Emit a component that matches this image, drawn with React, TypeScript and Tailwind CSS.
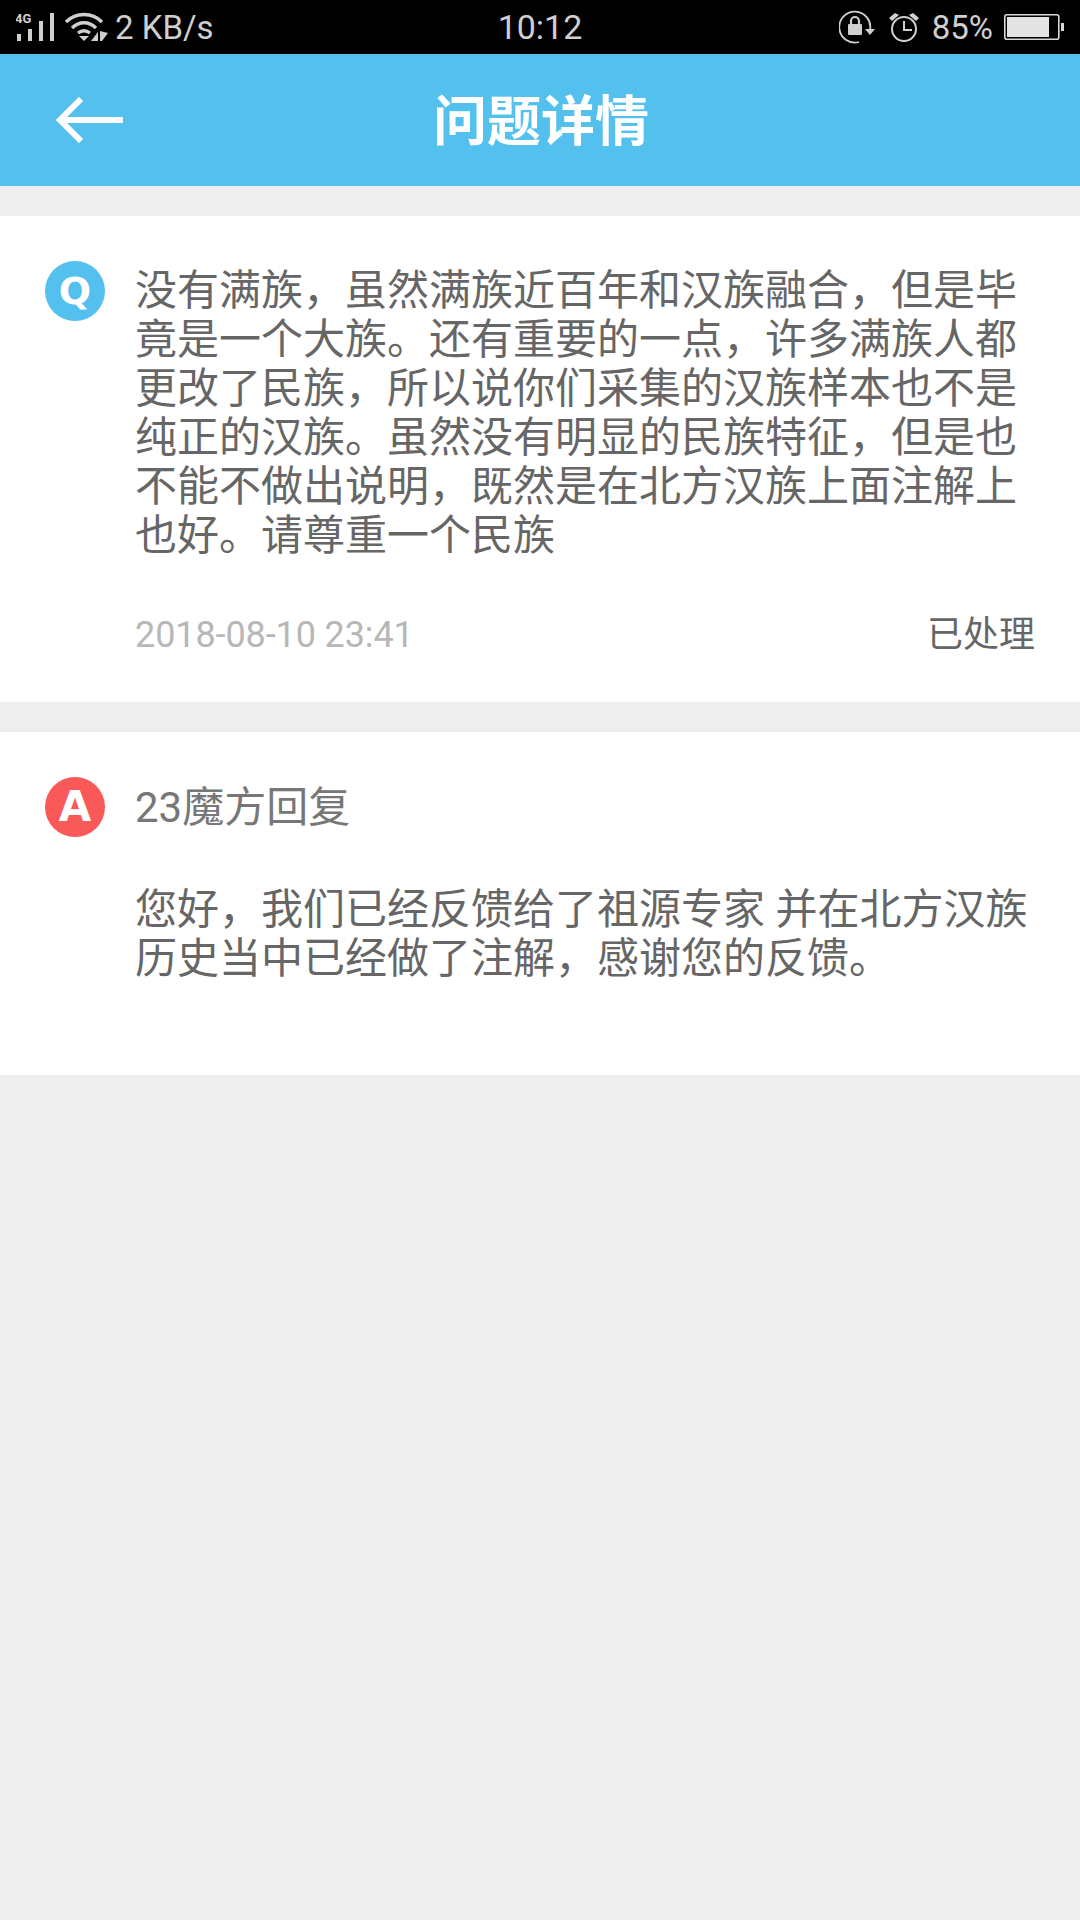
import React from "react";

const FONT = "font-['Roboto','Noto_Sans_CJK_SC',sans-serif]";

function StatusBar() {
  return (
    <div className="flex h-[54px] items-center justify-between bg-black text-[#cfcfcf]">
      <div className="flex w-[320px] items-center pl-[16px]">
        {/* signal */}
        <svg width="42" height="54" viewBox="0 0 42 54" fill="currentColor">
          <text x="-1" y="23" fontSize="13" fontWeight="700" fontFamily="Roboto">4G</text>
          <rect x="1" y="34" width="4" height="7" />
          <rect x="12" y="29" width="4" height="12" />
          <rect x="23" y="21" width="4" height="20" />
          <rect x="34" y="13" width="4" height="28" />
        </svg>
        {/* wifi */}
        <svg width="44" height="54" viewBox="0 0 44 54" className="ml-[7px]" fill="none" stroke="currentColor" strokeWidth="3.4">
          <path d="M1 22 C11 12 27 12 37 22" />
          <path d="M7 28 C14 21 24 21 31 28" />
          <path d="M13 33 C17 30 21 30 25 33" />
          <path d="M14 36 L24 36 L19 41 Z" fill="currentColor" stroke="none" />
          <path d="M26 41 L33 41 L33 32 Z" fill="currentColor" stroke="none" />
          <path d="M35 31 L35 41 L37 41 L43 33 Z" fill="currentColor" stroke="none" />
        </svg>
        <span className="ml-[6px] text-[33px] leading-none">2 KB/s</span>
      </div>
      <span className="text-[34px] leading-none">10:12</span>
      <div className="flex w-[320px] items-center justify-end pr-[16px]">
        {/* rotation lock */}
        <svg width="37" height="54" viewBox="0 0 37 54" fill="none" stroke="currentColor" strokeWidth="1.8">
          <path d="M31 30 A15.5 15.5 0 1 0 20 42" />
          <path d="M26 29 L36 29 L31 35 Z" fill="currentColor" stroke="none" />
          <rect x="9" y="24" width="14" height="11" rx="1" fill="currentColor" stroke="none" />
          <path d="M12 24 V21 A4 4 0 0 1 20 21 V24" strokeWidth="2.2" />
        </svg>
        {/* alarm */}
        <svg width="30" height="54" viewBox="0 0 30 54" className="ml-[13px]" fill="none" stroke="currentColor" strokeWidth="2">
          <circle cx="15" cy="29" r="12" />
          <path d="M15 21 V30 H23" />
          <path d="M0 18 L6 13 L10 15 L3 21 Z" fill="currentColor" stroke="none" />
          <path d="M30 18 L24 13 L20 15 L27 21 Z" fill="currentColor" stroke="none" />
        </svg>
        <span className="ml-[13px] text-[33px] leading-none">85%</span>
        {/* battery */}
        <svg width="60" height="54" viewBox="0 0 60 54" className="ml-[11px]" fill="none">
          <rect x="0.8" y="14.8" width="54" height="24.5" rx="2" stroke="#d8d8d8" strokeWidth="1.6" />
          <rect x="3" y="17" width="42" height="20" fill="#e4e4e4" />
          <rect x="57" y="23" width="3" height="8" fill="#d8d8d8" />
        </svg>
      </div>
    </div>
  );
}

function Badge({ letter, color, size }: { letter: string; color: string; size: string }) {
  return (
    <div className={`flex h-[60px] w-[60px] shrink-0 items-center justify-center rounded-full ${color}`}>
      <span className={`font-['DejaVu_Sans',sans-serif] leading-none font-bold text-white ${size}`}>{letter}</span>
    </div>
  );
}

export default function App() {
  return (
    <div className={`flex h-[1920px] w-[1080px] flex-col bg-[#eeeeee] ${FONT}`}>
      <StatusBar />

      <header className="relative flex h-[132px] items-center justify-center bg-[#53c0ee] pt-[6px] pl-[2px]">
        <button type="button" aria-label="back" className="absolute top-[43px] left-[56px]">
          <svg width="68" height="46" viewBox="0 0 68 46" fill="none" stroke="white" strokeWidth="6">
            <path d="M25 2 L4 23 L25 44" />
            <path d="M4 23 H67" />
          </svg>
        </button>
        <h1 className="text-[54px] leading-none font-bold text-white">问题详情</h1>
      </header>

      {/* question */}
      <section className="mt-[30px] flex h-[486px] bg-white pt-[50px] pl-[45px]">
        <div className="-mt-[5px]">
          <Badge letter="Q" color="bg-[#53c0ee]" size="text-[38px]" />
        </div>
        <div className="ml-[30px] flex-1">
          <p className="w-[890px] text-[42px] leading-[49px] text-[#666666]">
            没有满族，虽然满族近百年和汉族融合，但是毕竟是一个大族。还有重要的一点，许多满族人都更改了民族，所以说你们采集的汉族样本也不是纯正的汉族。虽然没有明显的民族特征，但是也不能不做出说明，既然是在北方汉族上面注解上也好。请尊重一个民族
          </p>
          <div className="mt-[50px] flex items-center justify-between pr-[45px]">
            <span className="text-[36px] leading-[50px] tracking-[-0.1px] text-[#b7b7b7]">2018-08-10 23:41</span>
            <span className="text-[36px] leading-[50px] text-[#666666]">已处理</span>
          </div>
        </div>
      </section>

      {/* answer */}
      <section className="mt-[30px] flex h-[343px] bg-white pt-[46px] pl-[45px]">
        <div className="-mt-[1px]">
          <Badge letter="A" color="bg-[#f95959]" size="text-[42px]" />
        </div>
        <div className="ml-[30px] flex-1">
          <p className="text-[42px] leading-[60px] text-[#777777]">23魔方回复</p>
          <p className="mt-[47px] w-[900px] text-[42px] leading-[49px] text-[#666666]">
            您好，我们已经反馈给了祖源专家 并在北方汉族历史当中已经做了注解，感谢您的反馈。
          </p>
        </div>
      </section>
    </div>
  );
}
